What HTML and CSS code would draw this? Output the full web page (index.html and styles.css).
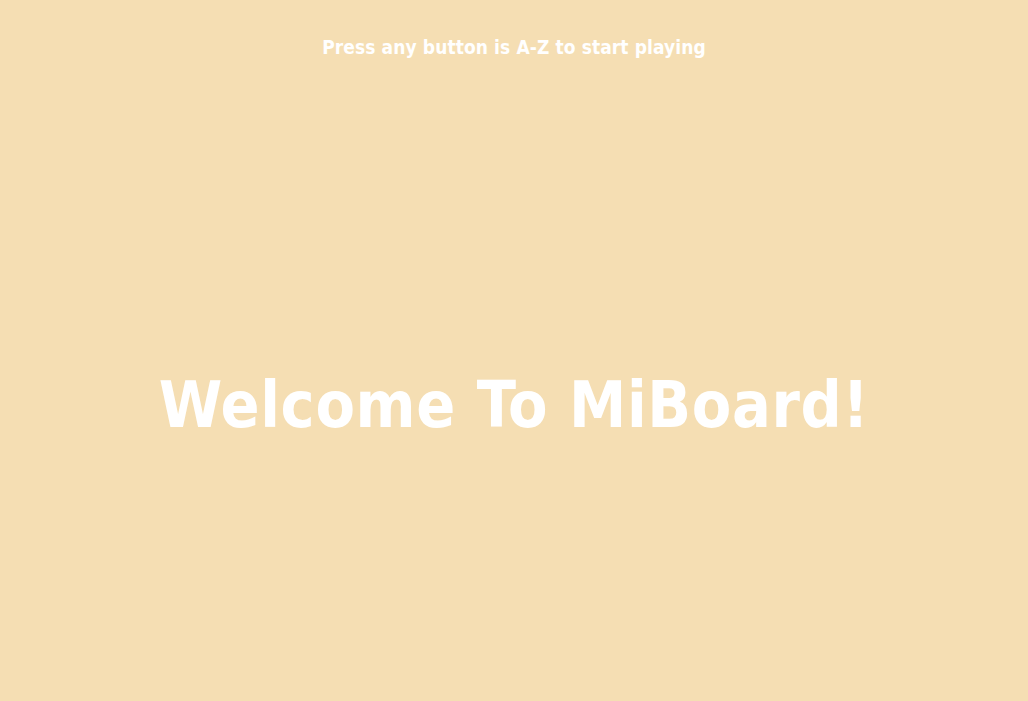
FILE: index.html
```html
<!DOCTYPE html>
<html>
<head>
<meta charset="utf-8">
<link rel="stylesheet" href="styles.css">
</head>
<body>
<div class="page">
  <p class="hint">Press any button is A-Z to start playing</p>
  <h1 class="title">Welcome To MiBoard!</h1>
</div>
</body>
</html>
```
FILE: styles.css
```css
html, body {
  margin: 0;
  padding: 0;
  height: 100%;
}
body {
  background: #f5deb3;
  font-family: "DejaVu Sans Condensed", "DejaVu Sans", sans-serif;
  color: #fff;
}
.page {
  height: 701px;
  display: flex;
  flex-direction: column;
  align-items: center;
}
.hint {
  margin: 36px 0 0;
  font-size: 19px;
  font-weight: bold;
  line-height: 22px;
  letter-spacing: 0.1px;
}
.title {
  margin: 310px 0 0;
  font-size: 64px;
  font-weight: bold;
  line-height: 74px;
  letter-spacing: 0.65px;
}
```
